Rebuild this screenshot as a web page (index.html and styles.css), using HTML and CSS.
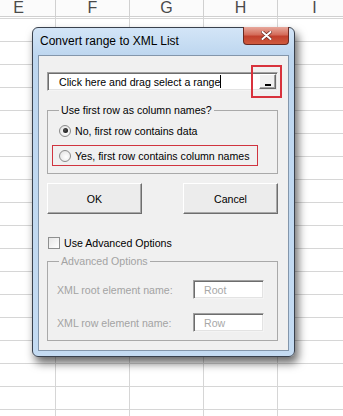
FILE: index.html
```html
<!DOCTYPE html>
<html lang="en">
<head>
  <meta charset="UTF-8" />
  <title>Convert range to XML List</title>
  <link rel="stylesheet" href="styles.css">
</head>
<body>

  <div class="sheet">
    <!-- column headers -->
    <div class="col-heads">
      <div class="col-head">E</div>
      <div class="col-head">F</div>
      <div class="col-head">G</div>
      <div class="col-head">H</div>
      <div class="col-head">I</div>
    </div>
    <div class="cells"></div>

    <!-- dialog -->
    <div class="dialog">
      <div class="titlebar">
        <span class="title">Convert range to XML List</span>
        <button class="close" type="button" aria-label="Close">
          <svg width="11" height="9" viewBox="0 0 11 9">
            <path d="M1.5 1 L9.5 8 M9.5 1 L1.5 8" stroke="#6b2a22" stroke-width="3.4" stroke-linecap="round"/>
            <path d="M1.5 1 L9.5 8 M9.5 1 L1.5 8" stroke="#ffffff" stroke-width="2" stroke-linecap="round"/>
          </svg>
        </button>
      </div>

      <div class="client">
        <div class="range-row">
          <div class="range-box">
            <span class="range-text">Click here and drag select a range</span><span class="caret"></span>
            <button class="collapse" type="button"><span class="dash"></span></button>
          </div>
          <div class="annot"></div>
        </div>

        <fieldset class="group group-header">
          <legend>Use first row as column names?</legend>
          <label class="option"><span class="radio checked"></span>No, first row contains data</label>
          <label class="option marked"><span class="radio"></span>Yes, first row contains column names</label>
        </fieldset>

        <div class="actions">
          <button class="btn" type="button">OK</button>
          <button class="btn" type="button">Cancel</button>
        </div>

        <label class="check-row"><span class="checkbox"></span>Use Advanced Options</label>

        <fieldset class="group group-advanced">
          <legend>Advanced Options</legend>
          <div class="field">
            <span class="field-label">XML root element name:</span>
            <span class="field-box">Root</span>
          </div>
          <div class="field">
            <span class="field-label">XML row element name:</span>
            <span class="field-box">Row</span>
          </div>
        </fieldset>
      </div>
    </div>
  </div>

</body>
</html>
```

FILE: styles.css
```css
body {
  margin: 0;
  background: #ffffff;
  overflow: hidden;
}

.sheet {
  position: relative;
  width: 343px;
  height: 416px;
  overflow: hidden;
  display: flex;
  flex-direction: column;
}

.col-heads {
  display: flex;
  margin-left: -18px;
  height: 16px;
  border-bottom: 1px solid #d0d0d0;
  background: #fbfbfb;
}

.col-head {
  flex: 0 0 74px;
  box-sizing: border-box;
  border-right: 1px solid #d0d0d0;
  text-align: center;
  font-family: "Liberation Sans", Arial, sans-serif;
  font-size: 16px;
  line-height: 15px;
  color: #4a4a4a;
}

.cells {
  flex: 1;
  background-image:
    linear-gradient(to right, transparent 73px, #d6d6d6 73px),
    linear-gradient(to bottom, transparent 22px, #d6d6d6 22px);
  background-size: 74px 100%, 100% 23px;
  background-position: -18px 0, 0 2px;
}

/* window */
.dialog {
  position: absolute;
  left: 32px;
  top: 27px;
  width: 263px;
  height: 330px;
  box-sizing: border-box;
  border: 1px solid #39414d;
  border-radius: 6px;
  background: linear-gradient(#d3e5f7, #bdd6ef 28px, #c4dbf2);
  box-shadow: 3px 6px 10px rgba(0, 0, 0, 0.6);
  display: flex;
  flex-direction: column;
  font-family: "Liberation Sans", Arial, sans-serif;
}

.titlebar {
  position: relative;
  height: 27px;
  display: flex;
  align-items: center;
  padding-left: 7px;
}

.title {
  font-size: 12px;
  color: #000000;
  margin-top: -1px;
}

.close {
  position: absolute;
  top: -1px;
  right: 5px;
  width: 46px;
  height: 18px;
  padding: 0;
  border: 1px solid #6a2a22;
  border-top: none;
  border-radius: 0 0 4px 4px;
  background: linear-gradient(#e7a89c, #d46c5a 45%, #c2402d 55%, #cf5a3e);
  display: flex;
  align-items: center;
  justify-content: center;
}

.client {
  flex: 1;
  margin: 0 5px 5px;
  border: 1px solid #8396ab;
  background: #f0f0f0;
  padding: 0 8px;
  font-size: 10.6px;
  color: #000000;
}

/* range picker */
.range-row {
  position: relative;
  margin-top: 16px;
  width: 231px;
}

.range-box {
  height: 19px;
  box-sizing: border-box;
  display: flex;
  align-items: center;
  padding-left: 11px;
  background: #ffffff;
  border: 1px solid;
  border-color: #a0a0a0 #f4f4f4 #f4f4f4 #a0a0a0;
  box-shadow: inset 1px 1px 0 #6d6d6d, inset -1px -1px 0 #e3e3e3;
}

.caret {
  width: 1px;
  height: 13px;
  background: #000000;
}

.collapse {
  margin-left: auto;
  margin-right: 1px;
  width: 17px;
  height: 15px;
  box-sizing: border-box;
  padding: 0 0 2px;
  border: 1px solid;
  border-color: #ffffff #696969 #696969 #ffffff;
  box-shadow: inset -1px -1px 0 #a0a0a0;
  background: #f0f0f0;
  display: flex;
  align-items: flex-end;
  justify-content: center;
}

.dash {
  width: 6px;
  height: 2px;
  background: #000000;
}

/* red annotation round the collapse button */
.annot {
  position: absolute;
  left: 204px;
  top: -7px;
  width: 31px;
  height: 33px;
  box-sizing: border-box;
  border: 2px solid #d8323c;
}

/* group boxes */
.group {
  margin: 0;
  min-width: 0;
  width: 231px;
  box-sizing: border-box;
  border: 1px solid #a9a9a9;
}

.group legend {
  padding: 0 2px;
  line-height: 13px;
}

.group-header {
  margin-top: 13px;
  padding: 3px 0 7px 4px;
}

.group-header legend {
  margin-left: 7px;
}

.option {
  display: flex;
  align-items: center;
  gap: 4px;
  width: 206px;
  height: 21px;
  box-sizing: border-box;
  padding-left: 6px;
  border: 1px solid transparent;
}

.option + .option {
  margin-top: 4px;
}

.option.marked {
  border-color: #d0343f;
}

.radio {
  position: relative;
  width: 12px;
  height: 12px;
  box-sizing: border-box;
  border: 1px solid #8a8a8a;
  border-radius: 50%;
  background: radial-gradient(circle at 60% 60%, #ffffff, #dedede);
}

.radio.checked::after {
  content: "";
  position: absolute;
  left: 2.5px;
  top: 2.5px;
  width: 5px;
  height: 5px;
  border-radius: 50%;
  background: radial-gradient(circle at 40% 40%, #555555, #000000);
}

/* buttons */
.actions {
  display: flex;
  justify-content: space-between;
  width: 231px;
  margin-top: 9px;
}

.btn {
  width: 95px;
  height: 31px;
  box-sizing: border-box;
  padding: 0;
  font-family: "Liberation Sans", Arial, sans-serif;
  font-size: 10.6px;
  color: #000000;
  background: #ececec;
  border: 1px solid;
  border-color: #ffffff #6e6e6e #6e6e6e #ffffff;
  box-shadow: inset -1px -1px 0 #a8a8a8;
}

.check-row {
  display: flex;
  align-items: center;
  gap: 4px;
  height: 17px;
  margin-top: 20px;
  padding-left: 1px;
}

.checkbox {
  width: 12px;
  height: 12px;
  box-sizing: border-box;
  border: 1px solid #8e8f8f;
  background: linear-gradient(135deg, #e6e6e6, #ffffff);
}

/* advanced options (disabled) */
.group-advanced {
  margin-top: 4px;
  padding: 12px 0 8px 9px;
  color: #a3a3a3;
}

.group-advanced legend {
  margin-left: 2px;
}

.field {
  display: flex;
  align-items: center;
  height: 19px;
}

.field + .field {
  margin-top: 14px;
}

.field-label {
  width: 136px;
}

.field-box {
  width: 71px;
  height: 19px;
  box-sizing: border-box;
  padding-left: 10px;
  display: flex;
  align-items: center;
  color: #a8a8a8;
  background: #ffffff;
  border: 1px solid;
  border-color: #a0a0a0 #f4f4f4 #f4f4f4 #a0a0a0;
  box-shadow: inset 1px 1px 0 #6d6d6d, inset -1px -1px 0 #e3e3e3;
}
```
